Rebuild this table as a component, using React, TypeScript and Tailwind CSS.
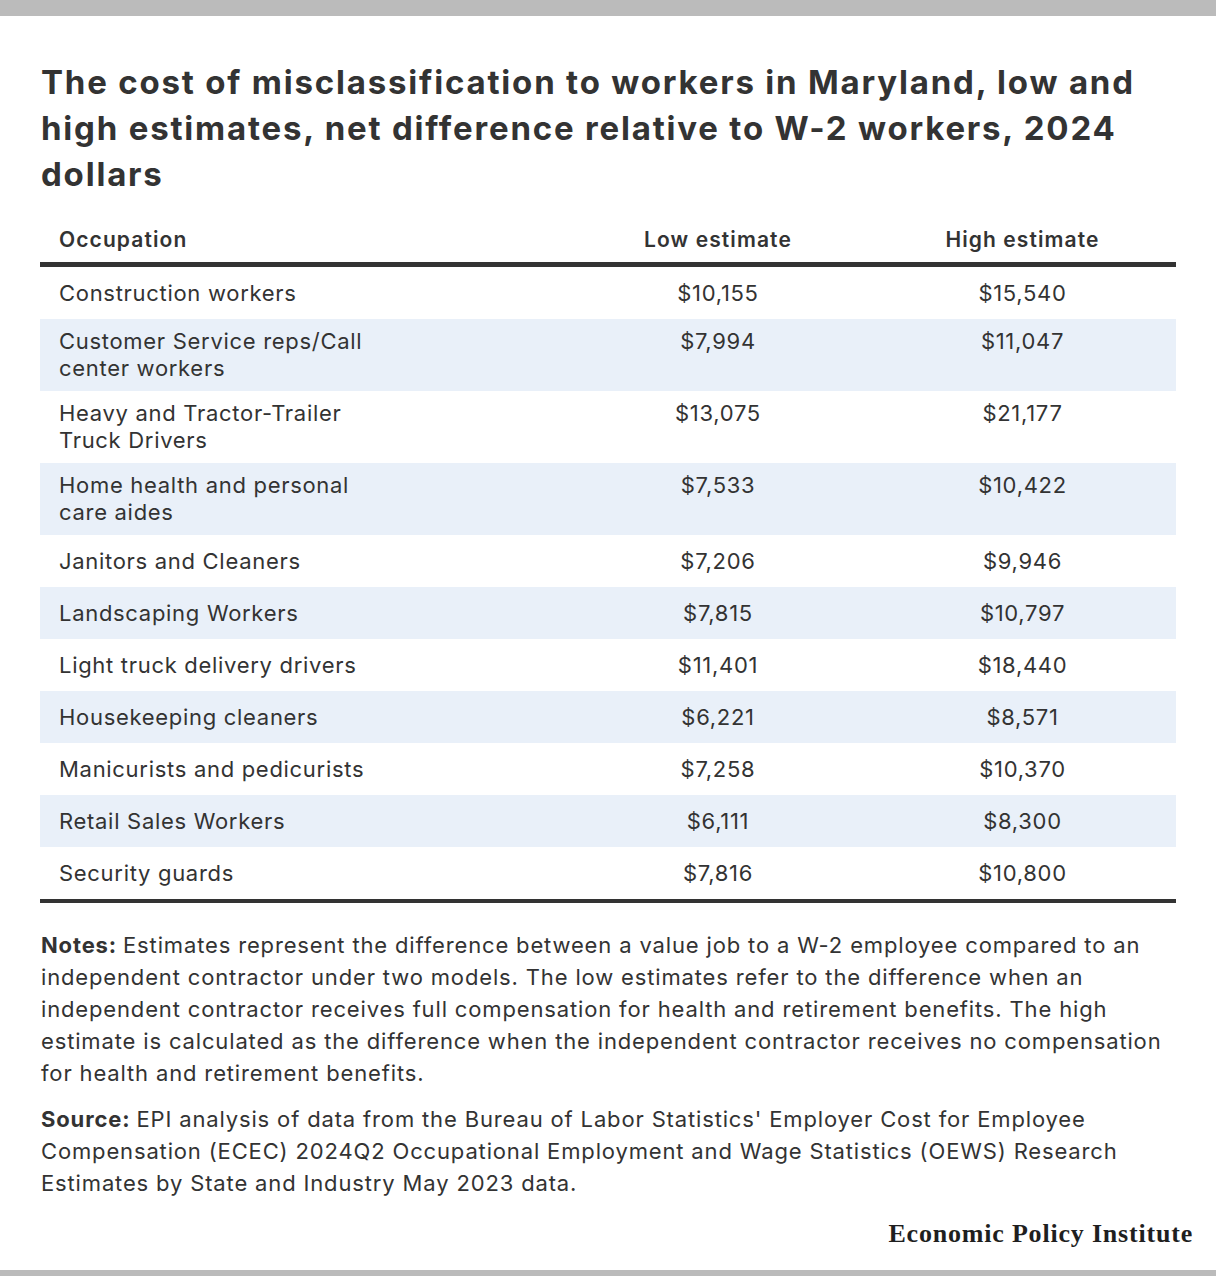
const rows: { name: string; low: string; high: string; two?: boolean }[] = [
  { name: "Construction workers", low: "$10,155", high: "$15,540" },
  { name: "Customer Service reps/Call center workers", low: "$7,994", high: "$11,047", two: true },
  { name: "Heavy and Tractor-Trailer Truck Drivers", low: "$13,075", high: "$21,177", two: true },
  { name: "Home health and personal care aides", low: "$7,533", high: "$10,422", two: true },
  { name: "Janitors and Cleaners", low: "$7,206", high: "$9,946" },
  { name: "Landscaping Workers", low: "$7,815", high: "$10,797" },
  { name: "Light truck delivery drivers", low: "$11,401", high: "$18,440" },
  { name: "Housekeeping cleaners", low: "$6,221", high: "$8,571" },
  { name: "Manicurists and pedicurists", low: "$7,258", high: "$10,370" },
  { name: "Retail Sales Workers", low: "$6,111", high: "$8,300" },
  { name: "Security guards", low: "$7,816", high: "$10,800" },
];

export default function App() {
  return (
    <div className="flex h-[1276px] w-[1216px] flex-col bg-white font-['Inter',sans-serif] text-[#333333]">
      <div className="h-[16px] shrink-0 bg-[#bbbbbb]" />

      <h1 className="mt-[43px] pl-[41px] pr-[40px] text-[33px] font-bold leading-[46px] tracking-[1.8px] text-[#333333]">
        The cost of misclassification to workers in Maryland, low and high estimates, net difference relative to W-2 workers, 2024 dollars
      </h1>

      <div className="mx-[40px] mt-[30px]">
        <div className="grid grid-cols-[527px_302px_1fr] border-b-[5px] border-[#333333] pb-[9px] text-[21px] font-semibold leading-[26px] tracking-[1.1px]">
          <div className="pl-[19px]">Occupation</div>
          <div className="text-center">Low estimate</div>
          <div className="text-center">High estimate</div>
        </div>
        <div className="border-b-[4px] border-[#333333]">
          {rows.map((r, i) => (
            <div
              key={r.name}
              className={`grid grid-cols-[527px_302px_1fr] text-[22px] leading-[27px] tracking-[0.7px] ${
                r.two ? "py-[9px]" : "py-[12.5px]"
              } ${i % 2 === 1 ? "bg-[#e9f0f9]" : "bg-white"}`}
            >
              <div className="max-w-[345px] pl-[19px]">{r.name}</div>
              <div className="text-center">{r.low}</div>
              <div className="text-center">{r.high}</div>
            </div>
          ))}
        </div>
      </div>

      <div className="mt-[26px] space-y-[14px] pl-[41px] pr-[40px] text-[22px] leading-[32px] tracking-[0.85px]">
        <p>
          <strong className="font-bold">Notes: </strong>
          Estimates represent the difference between a value job to a W-2 employee compared to an independent contractor under two models. The low estimates refer to the difference when an independent contractor receives full compensation for health and retirement benefits. The high estimate is calculated as the difference when the independent contractor receives no compensation for health and retirement benefits.
        </p>
        <p>
          <strong className="font-bold">Source: </strong>
          EPI analysis of data from the Bureau of Labor Statistics' Employer Cost for Employee Compensation (ECEC) 2024Q2 Occupational Employment and Wage Statistics (OEWS) Research Estimates by State and Industry May 2023 data.
        </p>
      </div>

      <div className="mt-auto flex justify-end pb-[21px] pr-[23px]">
        <span className="font-['Liberation_Serif',serif] text-[26px] font-bold leading-[30px] tracking-[0.8px] text-[#1f1f1f]">
          Economic Policy Institute
        </span>
      </div>
      <div className="h-[6px] shrink-0 bg-[#bbbbbb]" />
    </div>
  );
}
